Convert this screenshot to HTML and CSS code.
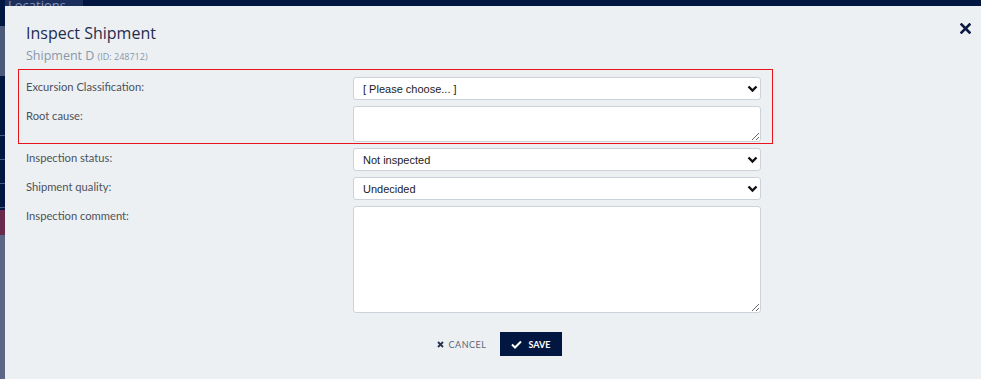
FILE: index.html
```html
<!DOCTYPE html>
<html lang="en">
<head>
    <meta charset="UTF-8">
    <title>Inspect Shipment</title>
    <link rel="stylesheet" href="styles.css">
</head>
<body>

    <div class="page">
        <div class="topbar">
            <span class="tab">Locations</span>
        </div>
        <div class="side">
            <div class="side-a"></div>
            <div class="side-b"></div>
            <div class="side-c"></div>
            <div class="side-d"></div>
            <div class="side-e"></div>
        </div>
    </div>

    <div class="modal">
        <button class="close-btn" title="Close">
            <svg width="11" height="11" viewBox="0 0 11 11"><path d="M1.5 1.5 L9.5 9.5 M9.5 1.5 L1.5 9.5" stroke="#0b1a40" stroke-width="2.6" stroke-linecap="square"/></svg>
        </button>

        <h1 class="title">Inspect Shipment</h1>
        <div class="subtitle">Shipment D <small>(ID: 248712)</small></div>

        <form class="inspect-form">
            <div class="required-box">
                <div class="row">
                    <label>Excursion Classification:</label>
                    <div class="select-wrap">
                        <select>
                            <option>[ Please choose... ]</option>
                        </select>
                        <svg class="chev" width="11" height="8" viewBox="0 0 11 8"><path d="M1.5 1.5 L5.5 5.5 L9.5 1.5" fill="none" stroke="#111" stroke-width="2.4"/></svg>
                    </div>
                </div>
                <div class="row">
                    <label>Root cause:</label>
                    <textarea class="short"></textarea>
                </div>
            </div>

            <div class="row">
                <label>Inspection status:</label>
                <div class="select-wrap">
                    <select>
                        <option>Not inspected</option>
                    </select>
                    <svg class="chev" width="11" height="8" viewBox="0 0 11 8"><path d="M1.5 1.5 L5.5 5.5 L9.5 1.5" fill="none" stroke="#111" stroke-width="2.4"/></svg>
                </div>
            </div>
            <div class="row">
                <label>Shipment quality:</label>
                <div class="select-wrap">
                    <select>
                        <option>Undecided</option>
                    </select>
                    <svg class="chev" width="11" height="8" viewBox="0 0 11 8"><path d="M1.5 1.5 L5.5 5.5 L9.5 1.5" fill="none" stroke="#111" stroke-width="2.4"/></svg>
                </div>
            </div>
            <div class="row">
                <label>Inspection comment:</label>
                <textarea class="tall"></textarea>
            </div>

            <div class="actions">
                <button type="button" class="cancel-btn">
                    <svg width="7" height="7" viewBox="0 0 7 7"><path d="M1 1 L6 6 M6 1 L1 6" stroke="#26304d" stroke-width="1.8"/></svg>
                    CANCEL
                </button>
                <button type="button" class="save-btn">
                    <svg width="11" height="9" viewBox="0 0 11 9"><path d="M1 4.5 L4 7.5 L10 1.5" fill="none" stroke="#fff" stroke-width="2"/></svg>
                    SAVE
                </button>
            </div>
        </form>
    </div>

</body>
</html>
```

FILE: styles.css
```css
body {
    margin: 0;
    padding: 0;
    background-color: #011640;
    font-family: 'Lato', 'Open Sans', sans-serif;
    overflow: hidden;
    height: 379px;
}
.page {
    height: 379px;
    overflow: hidden;
}
.topbar {
    height: 26px;
    background-color: #011640;
    padding-left: 5px;
}
.tab {
    display: inline-block;
    width: 75px;
    height: 20px;
    background-color: #1c2f5c;
    color: #8796b6;
    font-size: 13px;
    line-height: 10px;
    padding-left: 3px;
    overflow: hidden;
    font-family: 'Open Sans', sans-serif;
}
.side {
    width: 5px;
}
.side-a {
    height: 50px;
    background-color: #4b5a7b;
}
.side-b {
    height: 36px;
    background-color: #011640;
}
.side-c {
    height: 98px;
    background: repeating-linear-gradient(#011640 0 23px, #4a5a7a 23px 24px);
}
.side-d {
    height: 25px;
    background-color: #6a2a4c;
}
.side-e {
    height: 200px;
    background-color: #5b6785;
}

.modal {
    position: absolute;
    top: 6px;
    left: 5px;
    width: 989px;
    height: 373px;
    overflow: hidden;
    background-color: #ecf0f3;
    box-sizing: border-box;
    padding: 17px 0 0 21px;
}
.close-btn {
    position: absolute;
    top: 16px;
    right: 23px;
    border: none;
    background: none;
    padding: 0;
    cursor: pointer;
}
.title {
    margin: 0;
    font-family: 'Open Sans', sans-serif;
    font-weight: normal;
    font-size: 16px;
    line-height: 20px;
    color: #1f2c4e;
}
.subtitle {
    margin-top: 4px;
    font-family: 'Open Sans', sans-serif;
    font-size: 12.5px;
    line-height: 18px;
    color: #8a97a9;
}
.subtitle small {
    font-size: 9px;
}
.inspect-form {
    margin-top: 3px;
    width: 735px;
}
.required-box {
    margin-left: -8px;
    width: 735px;
    padding: 7px 11px 1px 7px;
    border: 1px solid #e8141c;
    margin-bottom: 4px;
}
.row {
    display: grid;
    grid-template-columns: 327px 408px;
    margin-bottom: 6px;
}
.required-box .row:last-child {
    margin-bottom: 0;
}
label {
    font-size: 11.2px;
    color: #4d525a;
    padding-top: 2px;
    line-height: 16px;
}
.select-wrap {
    position: relative;
}
select, textarea {
    width: 408px;
    box-sizing: border-box;
    border: 1px solid #ccd2da;
    border-radius: 3px;
    background-color: #fff;
    font-family: 'Liberation Sans', Arial, sans-serif;
    font-size: 11px;
    color: #222;
    display: block;
    margin: 0;
}
select {
    appearance: none;
    height: 23px;
    padding: 0 20px 0 9px;
}
.chev {
    position: absolute;
    right: 3px;
    top: 8px;
    pointer-events: none;
}
textarea.short {
    height: 36px;
}
textarea.tall {
    height: 107px;
}
.actions {
    display: flex;
    justify-content: center;
    align-items: center;
    gap: 14px;
    margin-top: 19px;
    padding-left: 212px;
    width: 735px;
    box-sizing: border-box;
}
.cancel-btn {
    display: flex;
    align-items: center;
    gap: 5px;
    border: none;
    background: none;
    padding: 0;
    font-family: 'Lato', sans-serif;
    font-size: 9px;
    letter-spacing: 0.5px;
    color: #5d6576;
    cursor: pointer;
}
.save-btn {
    display: flex;
    align-items: center;
    gap: 6px;
    height: 24px;
    width: 62px;
    padding: 0 0 0 11px;
    border: none;
    background-color: #011640;
    color: #fff;
    font-family: 'Lato', sans-serif;
    font-weight: bold;
    font-size: 9px;
    cursor: pointer;
}
```
